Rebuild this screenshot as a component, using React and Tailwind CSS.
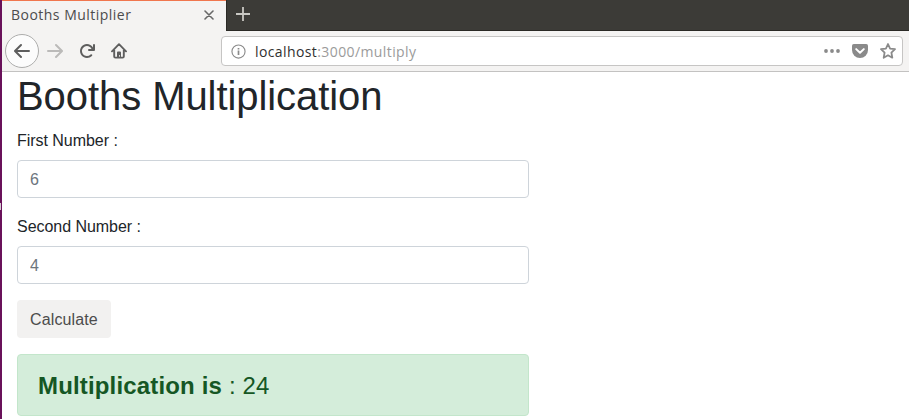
const ARROW =
  "M15 7H3.414l4.293-4.293a1 1 0 0 0-1.414-1.414l-6 6a1 1 0 0 0 0 1.414l6 6a1 1 0 0 0 1.414-1.414L3.414 9H15a1 1 0 0 0 0-2z";
const RELOAD =
  "M15 1a1 1 0 0 0-1 1v2.418A6.995 6.995 0 1 0 8 15a6.954 6.954 0 0 0 4.95-2.05 1 1 0 0 0-1.414-1.414A5.019 5.019 0 1 1 12.549 6H10a1 1 0 0 0 0 2h5a1 1 0 0 0 1-1V2a1 1 0 0 0-1-1z";

function Icon({ className = "", children }) {
  return (
    <svg viewBox="0 0 16 16" className={`size-4 shrink-0 ${className}`} fill="currentColor">
      {children}
    </svg>
  );
}

function TabStrip() {
  return (
    <div className="flex h-[31px] bg-[#3c3b37]">
      <div className="flex h-[31px] w-[224px] items-center justify-between border-t border-[#f0764e] bg-[#f4f3f2] pb-[2px] pl-[9px] pr-3">
        <span className="text-[14px] font-medium leading-5 tracking-[0.48px] text-[#4c4c4c]">Booths Multiplier</span>
        <svg viewBox="0 0 10 10" className="size-[10px]" fill="none" stroke="#686868" strokeWidth="1.6" strokeLinecap="round">
          <path d="M1 1l8 8M9 1l-8 8" />
        </svg>
      </div>
      <div className="flex flex-1 border-b border-l border-[#2a2925] pl-[9px] pt-[7px]">
        <svg viewBox="0 0 14 14" className="size-[14px]" fill="none" stroke="#c9c8c3" strokeWidth="1.8">
          <path d="M7 0v14M0 7h14" />
        </svg>
      </div>
    </div>
  );
}

function Toolbar() {
  return (
    <div className="flex h-[41px] items-center border-b border-[#c3c2c1] bg-[#f4f3f2] pl-[3px] pr-[6px] text-[#5e5e5e]">
      <div className="flex size-[34px] items-center justify-center rounded-full border border-[#adadac] bg-[#fcfcfc]">
        <Icon><path d={ARROW} /></Icon>
      </div>
      <Icon className="ml-2 -scale-x-100 text-[#bbbab9]"><path d={ARROW} /></Icon>
      <Icon className="ml-4"><path d={RELOAD} /></Icon>
      <Icon className="ml-4">
        <path
          d="M1 8.3L8 1.2l7 7.1M3.2 7v6.4q0 1.2 1.2 1.2h7.2q1.2 0 1.2-1.2V7"
          fill="none"
          stroke="currentColor"
          strokeWidth="1.9"
          strokeLinecap="round"
          strokeLinejoin="round"
        />
        <path d="M6 14V9.5Q6 8.5 7 8.5h2q1 0 1 1V14H8.8v-2H8v2z" />
      </Icon>
      <div className="ml-[94px] flex h-[30px] flex-1 items-center rounded-[4px] border border-[#c6c5c4] bg-white pl-[9px] pr-[6px] text-[#8a8a8a]">
        <svg viewBox="0 0 16 16" className="size-[15px]" fill="none" stroke="currentColor">
          <circle cx="8" cy="8" r="7" strokeWidth="1.2" />
          <path d="M8 7v4.6M8 4.2v1.7" strokeWidth="1.8" />
        </svg>
        <span className="ml-[9px] flex-1 pt-px text-[14px] leading-5 tracking-[0.4px] text-[#9b9b9b]">
          <span className="text-[#303030]">localhost</span>:3000/multiply
        </span>
        <Icon>
          <circle cx="2" cy="8" r="1.9" />
          <circle cx="8" cy="8" r="1.9" />
          <circle cx="14" cy="8" r="1.9" />
        </Icon>
        <Icon className="ml-3">
          <path d="M1.8 1h12.4Q16 1 16 2.8V7a8 8 0 0 1-16 0V2.8Q0 1 1.8 1z" />
          <path d="M4.2 6.1L8 9.8l3.8-3.7" fill="none" stroke="white" strokeWidth="2" strokeLinecap="round" strokeLinejoin="round" />
        </Icon>
        <Icon className="ml-3">
          <path
            d="M8 1l2.1 4.6 4.9.6-3.6 3.5.9 5L8 12.3l-4.3 2.4.9-5L1 6.2l4.9-.6z"
            fill="none"
            stroke="currentColor"
            strokeWidth="1.8"
            strokeLinejoin="round"
          />
        </Icon>
      </div>
    </div>
  );
}

function Field({ label, value }) {
  return (
    <label className="mb-4 block">
      <span className="mb-[7px] block pt-px leading-6 tracking-[-0.04px]">{label}</span>
      <input
        placeholder={value}
        className="block h-[38px] w-full rounded-[4px] border border-[#ced4da] bg-white px-3 pb-1 pt-1.5 leading-[26px] placeholder:text-[#6c757d]"
      />
    </label>
  );
}

export default function App() {
  return (
    <div className="flex h-[419px] w-[909px] overflow-hidden bg-white">
      <div className="flex w-[2px] flex-col bg-[#69115a] pt-[203px]">
        <div className="h-[7px] w-px bg-[#d5ccd3]" />
      </div>
      <div className="min-w-0 flex-1">
        <header className="font-['Open_Sans','Noto_Sans',sans-serif]">
          <TabStrip />
          <Toolbar />
        </header>
        <main className="w-[527px] pl-[15px] font-['Liberation_Sans',Arial,sans-serif] text-base text-[#212529]">
          <h1 className="mb-2 text-[40px] font-normal leading-[48px] tracking-[-0.07px]">Booths Multiplication</h1>
          <Field label="First Number :" value="6" />
          <Field label="Second Number :" value="4" />
          <button className="mb-4 block h-[38px] w-[94px] rounded-[4px] bg-[#f2f1f0] pt-0.5 leading-6 tracking-[0.12px] text-[#4c4c4c]">
            Calculate
          </button>
          <div className="h-[62px] rounded-[4px] border border-[#c3e6cb] bg-[#d4edda] px-5 py-4 text-2xl leading-[29px] tracking-[0.16px] text-[#155724]">
            <strong className="font-bold">Multiplication is</strong> : 24
          </div>
        </main>
      </div>
    </div>
  );
}
